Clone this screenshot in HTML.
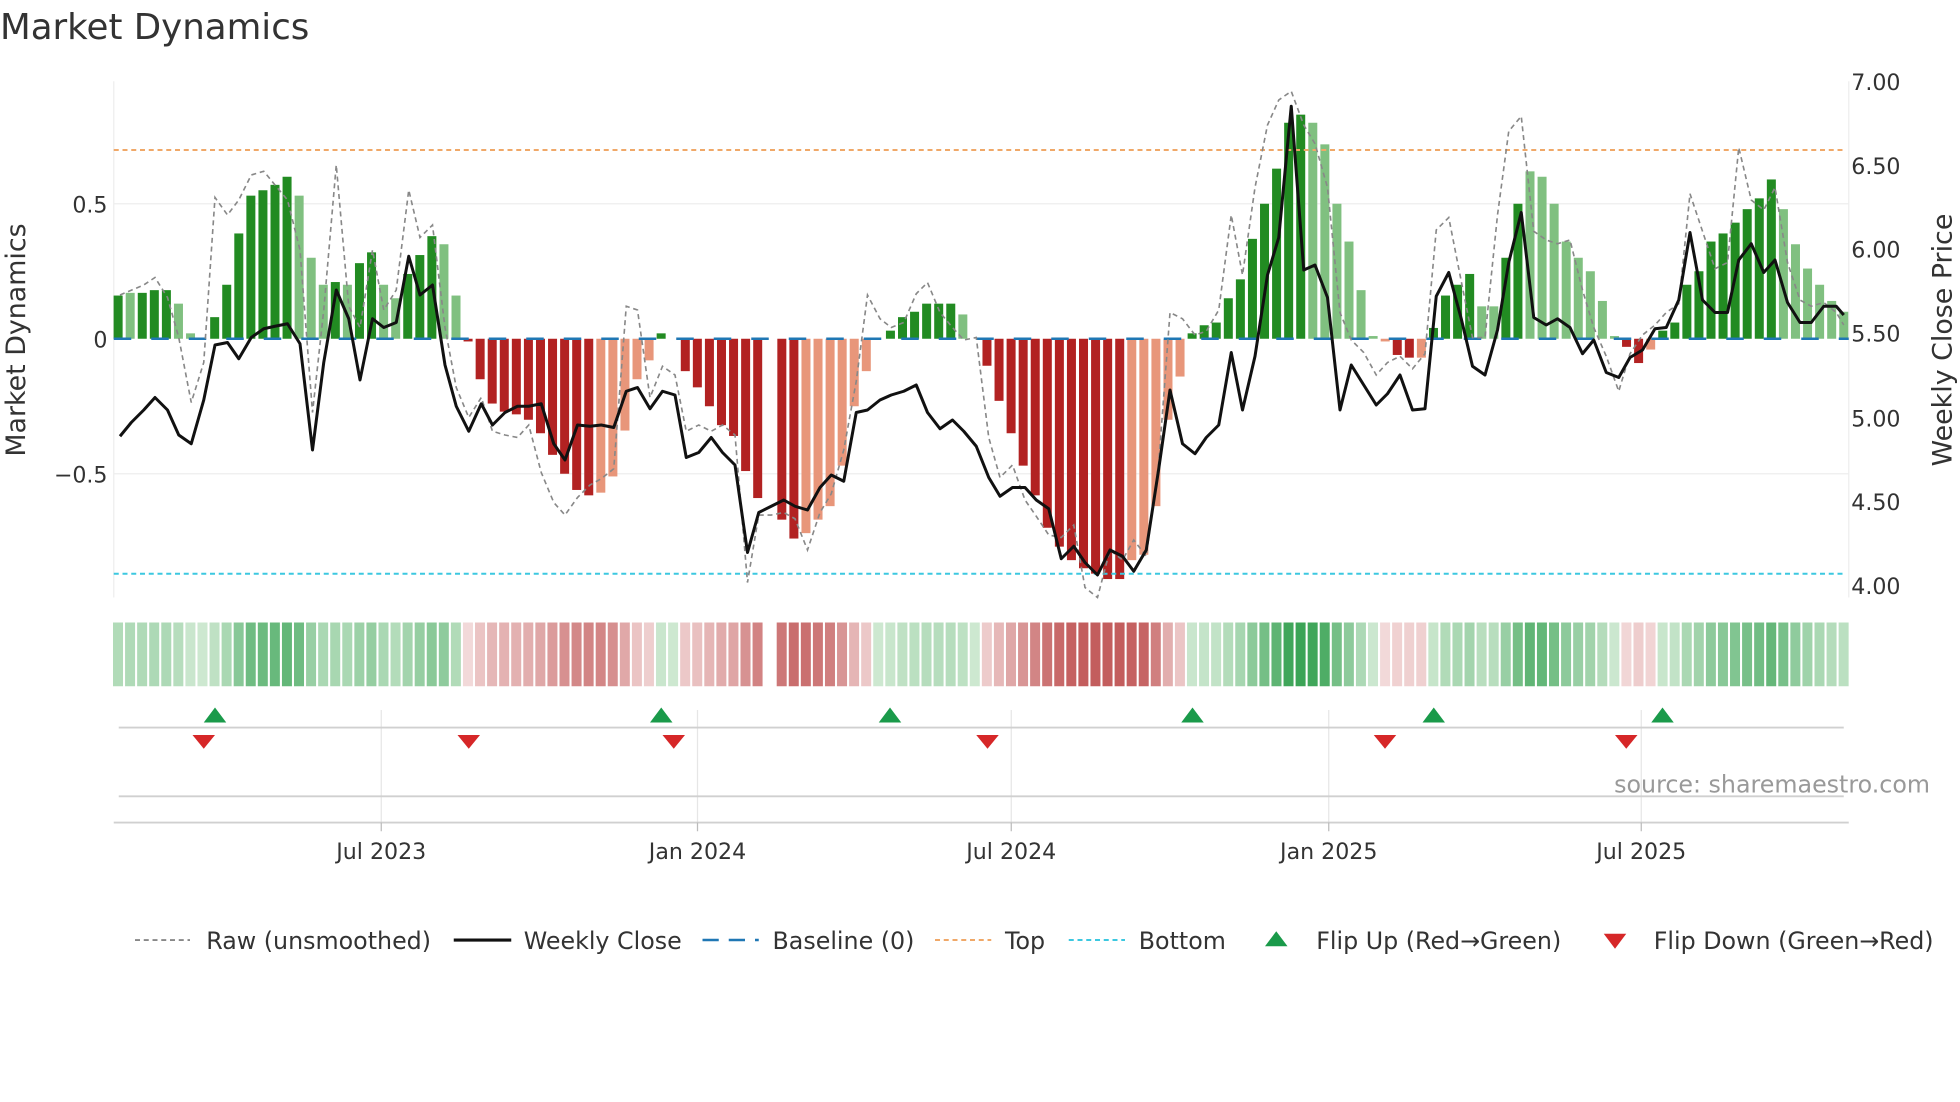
<!DOCTYPE html>
<html><head><meta charset="utf-8"><style>
html,body{margin:0;padding:0;background:#fff;width:1960px;height:1102px;overflow:hidden}
svg{display:block}
text{font-family:"DejaVu Sans","Liberation Sans",sans-serif;fill:#333}
</style></head><body>
<svg id="s" width="1960" height="1102" viewBox="0 0 1568 881.6" xmlns="http://www.w3.org/2000/svg">
<text x="0" y="31" font-size="28.5">Market Dynamics</text>
<line x1="91" y1="163" x2="1479" y2="163" stroke="#eee" stroke-width="1"/>
<line x1="91" y1="379" x2="1479" y2="379" stroke="#eee" stroke-width="1"/>
<line x1="91" y1="65" x2="91" y2="478" stroke="#eee"/>
<line x1="1479" y1="65" x2="1479" y2="478" stroke="#eee"/>
<g id="bars"></g>
<line x1="91" y1="271" x2="1479" y2="271" stroke="#1f77b4" stroke-width="2" stroke-dasharray="14,16"/>
<line x1="91" y1="120" x2="1475" y2="120" stroke="#f0a868" stroke-width="1.6" stroke-dasharray="4,3"/>
<line x1="91" y1="459" x2="1475" y2="459" stroke="#3cc8e0" stroke-width="1.6" stroke-dasharray="4,3"/>
<polyline id="raw" fill="none" stroke="#888" stroke-width="1.3" stroke-dasharray="4,3"/>
<polyline id="price" fill="none" stroke="#111" stroke-width="2.4" stroke-linejoin="round"/>
<text x="86" y="170" font-size="17.7" text-anchor="end">0.5</text>
<text x="86" y="278" font-size="17.7" text-anchor="end">0</text>
<text x="86" y="386" font-size="17.7" text-anchor="end">−0.5</text>
<text x="20" y="272" font-size="21.5" text-anchor="middle" transform="rotate(-90 20 272)">Market Dynamics</text>
<g font-size="17.7">
<text x="1481" y="72">7.00</text><text x="1481" y="139">6.50</text><text x="1481" y="206">6.00</text>
<text x="1481" y="273">5.50</text><text x="1481" y="341">5.00</text><text x="1481" y="408">4.50</text><text x="1481" y="475">4.00</text>
</g>
<text x="1561" y="272" font-size="21.5" text-anchor="middle" transform="rotate(-90 1561 272)">Weekly Close Price</text>
<g id="heat"></g>
<g stroke="#e6e6e6" stroke-width="1">
<line x1="305" y1="568" x2="305" y2="658"/><line x1="558" y1="568" x2="558" y2="658"/>
<line x1="809" y1="568" x2="809" y2="658"/><line x1="1063" y1="568" x2="1063" y2="658"/>
<line x1="1313" y1="568" x2="1313" y2="658"/></g>
<line x1="95" y1="582" x2="1475" y2="582" stroke="#d0d0d0" stroke-width="1.5"/>
<line x1="95" y1="637" x2="1475" y2="637" stroke="#d0d0d0" stroke-width="1.5"/>
<line x1="91" y1="658" x2="1479" y2="658" stroke="#d0d0d0" stroke-width="1.5"/>
<g stroke="#bbb"><line x1="305" y1="658" x2="305" y2="665"/><line x1="558" y1="658" x2="558" y2="665"/><line x1="809" y1="658" x2="809" y2="665"/><line x1="1063" y1="658" x2="1063" y2="665"/><line x1="1313" y1="658" x2="1313" y2="665"/></g>
<g id="marks"></g>
<text x="1544" y="634" font-size="19" text-anchor="end" style="fill:#999">source: sharemaestro.com</text>
<g font-size="17.7" text-anchor="middle">
<text x="305" y="687">Jul 2023</text><text x="558" y="687">Jan 2024</text><text x="809" y="687">Jul 2024</text><text x="1063" y="687">Jan 2025</text><text x="1313" y="687">Jul 2025</text></g>
<g font-size="19">
<line x1="108" y1="752" x2="152" y2="752" stroke="#888" stroke-width="1.5" stroke-dasharray="4,3"/>
<text x="165" y="759">Raw (unsmoothed)</text>
<line x1="363" y1="752" x2="409" y2="752" stroke="#111" stroke-width="2.5"/>
<text x="419" y="759">Weekly Close</text>
<line x1="562" y1="752" x2="607" y2="752" stroke="#1f77b4" stroke-width="2" stroke-dasharray="13,8"/>
<text x="618" y="759">Baseline (0)</text>
<line x1="748" y1="752" x2="793" y2="752" stroke="#f0a868" stroke-width="1.6" stroke-dasharray="4,3"/>
<text x="804" y="759">Top</text>
<line x1="855" y1="752" x2="900" y2="752" stroke="#3cc8e0" stroke-width="1.6" stroke-dasharray="4,3"/>
<text x="911" y="759">Bottom</text>
<polygon points="1012,757 1030,757 1021,745" fill="#1a9a4a"/>
<text x="1053" y="759">Flip Up (Red→Green)</text>
<polygon points="1283,747 1301,747 1292,759" fill="#d62728"/>
<text x="1323" y="759">Flip Down (Green→Red)</text>
</g>
</svg>
<script>
var NS="http://www.w3.org/2000/svg";
function el(p,t,a){var e=document.createElementNS(NS,t);for(var k in a)e.setAttribute(k,a[k]);p.appendChild(e);return e;}
var B=[[.16,1],[.17,0],[.17,1],[.18,1],[.18,1],[.13,0],[.02,0],[.0,0],[.08,1],[.2,1],[.39,1],[.53,1],[.55,1],[.57,1],[.6,1],[.53,0],[.3,0],[.2,0],[.21,1],[.2,0],[.28,1],[.32,1],[.2,0],[.15,0],[.24,1],[.31,1],[.38,1],[.35,0],[.16,0],[-.01,1],[-.15,1],[-.24,1],[-.27,1],[-.28,1],[-.3,1],[-.35,1],[-.43,1],[-.5,1],[-.56,1],[-.58,1],[-.57,0],[-.51,0],[-.34,0],[-.15,0],[-.08,0],[.02,1],[0,0],[-.12,1],[-.18,1],[-.25,1],[-.32,1],[-.36,1],[-.49,1],[-.59,1],[0,2],[-.67,1],[-.74,1],[-.72,0],[-.67,0],[-.62,0],[-.47,0],[-.25,0],[-.12,0],[0,0],[.03,1],[.08,1],[.1,1],[.13,1],[.13,1],[.13,1],[.09,0],[0,0],[-.1,1],[-.23,1],[-.35,1],[-.47,1],[-.58,1],[-.7,1],[-.77,1],[-.82,1],[-.85,1],[-.87,1],[-.89,1],[-.89,1],[-.82,0],[-.8,0],[-.62,0],[-.3,0],[-.14,0],[.02,1],[.05,1],[.06,1],[.15,1],[.22,1],[.37,1],[.5,1],[.63,1],[.8,1],[.83,1],[.8,0],[.72,0],[.5,0],[.36,0],[.18,0],[.01,0],[-.01,0],[-.06,1],[-.07,1],[-.07,0],[.04,1],[.16,1],[.2,1],[.24,1],[.12,0],[.12,0],[.3,1],[.5,1],[.62,0],[.6,0],[.5,0],[.36,0],[.3,0],[.25,0],[.14,0],[.01,0],[-.03,1],[-.09,1],[-.04,0],[.03,1],[.06,1],[.2,1],[.25,1],[.36,1],[.39,1],[.43,1],[.48,1],[.52,1],[.59,1],[.48,0],[.35,0],[.26,0],[.2,0],[.14,0],[.1,0]];
var g=document.getElementById('bars'),h=document.getElementById('heat'),n=B.length,dx=(1475-94.5)/(n-1);
B.forEach(function(b,i){var cx=94.5+i*dx,v=b[0];if(b[1]==2)return;
 var y0=271,y1=271-v*216,col=v>=0?(b[1]?"#228b22":"#80c080"):(b[1]?"#b22222":"#e8967a");
 if(Math.abs(v)>0.004)el(g,'rect',{x:cx-3.6,y:Math.min(y0,y1),width:7.2,height:Math.abs(y1-y0),fill:col});
 var a=Math.min(1,Math.abs(v)/0.85),c;
 if(v>=0){c="rgb("+Math.round(205-150*a)+","+Math.round(232-70*a)+","+Math.round(208-125*a)+")";}
 else{c="rgb("+Math.round(243-48*a)+","+Math.round(218-125*a)+","+Math.round(218-125*a)+")";}
 el(h,'rect',{x:cx-4.1,y:498,width:8,height:51,fill:c});
});
var P=[[96,349],[105,338],[115,328],[124,318],[134,328],[143,348],[153,355],[163,320],[172,276],[182,274],[191,287],[201,270],[211,263],[220,261],[230,259],[240,275],[250,360],[259,290],[269,232],[279,255],[288,304],[298,255],[307,262],[317,258],[327,205],[336,236],[346,228],[356,292],[365,325],[375,345],[385,323],[394,340],[404,330],[414,325],[423,325],[433,323],[443,355],[452,368],[462,340],[472,341],[481,340],[491,342],[501,313],[510,310],[520,327],[530,313],[540,316],[549,366],[559,362],[569,350],[578,362],[588,372],[598,442],[607,410],[617,405],[627,400],[636,405],[646,408],[656,390],[665,380],[675,385],[685,330],[694,328],[704,320],[713,316],[723,313],[733,308],[742,330],[752,343],[762,336],[771,345],[781,357],[791,382],[800,397],[810,390],[820,390],[829,400],[839,407],[849,447],[859,437],[868,450],[878,460],[888,440],[898,445],[907,457],[917,440],[927,375],[936,312],[946,355],[956,363],[965,350],[975,340],[985,282],[994,328],[1004,285],[1014,220],[1023,190],[1033,85],[1043,216],[1052,212],[1062,238],[1072,328],[1081,292],[1091,308],[1101,324],[1110,315],[1120,300],[1130,328],[1140,327],[1149,237],[1159,218],[1169,255],[1178,293],[1188,300],[1198,264],[1207,210],[1217,170],[1227,254],[1237,260],[1246,255],[1256,262],[1266,283],[1275,272],[1285,298],[1295,302],[1304,286],[1314,280],[1324,263],[1333,262],[1343,240],[1352,186],[1362,240],[1372,250],[1382,250],[1391,208],[1401,195],[1411,218],[1420,208],[1430,242],[1440,258],[1449,258],[1459,245],[1469,245],[1475,252]];
var R=[[96,236],[115,228],[124,222],[134,238],[143,270],[153,322],[163,290],[172,158],[182,172],[191,160],[201,140],[211,137],[220,148],[230,160],[240,200],[250,330],[259,248],[269,132],[279,245],[288,262],[298,200],[307,248],[317,232],[327,152],[336,190],[346,180],[356,262],[365,310],[375,334],[385,318],[394,345],[404,348],[414,350],[423,340],[433,378],[443,402],[452,412],[462,398],[472,388],[481,383],[491,375],[501,245],[510,248],[520,318],[530,293],[540,300],[549,345],[559,340],[569,345],[578,340],[588,348],[598,466],[607,412],[617,412],[627,410],[636,415],[646,440],[656,410],[665,395],[675,360],[685,305],[694,236],[704,255],[713,262],[723,258],[733,235],[742,226],[752,250],[762,262],[771,272],[781,270],[791,350],[800,382],[810,372],[820,400],[829,413],[839,428],[849,430],[859,420],[868,470],[878,478],[888,440],[898,448],[907,432],[917,445],[927,370],[936,250],[946,255],[956,268],[965,265],[975,248],[985,172],[994,220],[1004,150],[1014,100],[1023,80],[1033,73],[1043,100],[1052,115],[1062,150],[1072,250],[1081,272],[1091,282],[1101,300],[1110,290],[1120,285],[1130,295],[1140,283],[1149,184],[1159,174],[1169,225],[1178,270],[1188,270],[1198,172],[1207,105],[1217,93],[1227,185],[1237,192],[1246,195],[1256,192],[1266,232],[1275,262],[1285,285],[1295,313],[1304,283],[1314,268],[1324,260],[1333,250],[1343,243],[1352,155],[1362,185],[1372,215],[1382,210],[1391,118],[1401,160],[1411,168],[1420,150],[1430,210],[1440,240],[1449,245],[1459,242],[1469,250],[1475,260]];
document.getElementById('price').setAttribute('points',P.map(function(p){return p.join(',')}).join(' '));
document.getElementById('raw').setAttribute('points',R.map(function(p){return p.join(',')}).join(' '));
var m=document.getElementById('marks');
[172,529,712,954,1147,1330].forEach(function(x){el(m,'polygon',{points:(x-9)+',578 '+(x+9)+',578 '+x+',566',fill:'#1a9a4a'});});
[163,375,539,790,1108,1301].forEach(function(x){el(m,'polygon',{points:(x-9)+',588 '+(x+9)+',588 '+x+',599',fill:'#d62728'});});
</script>
</body></html>
